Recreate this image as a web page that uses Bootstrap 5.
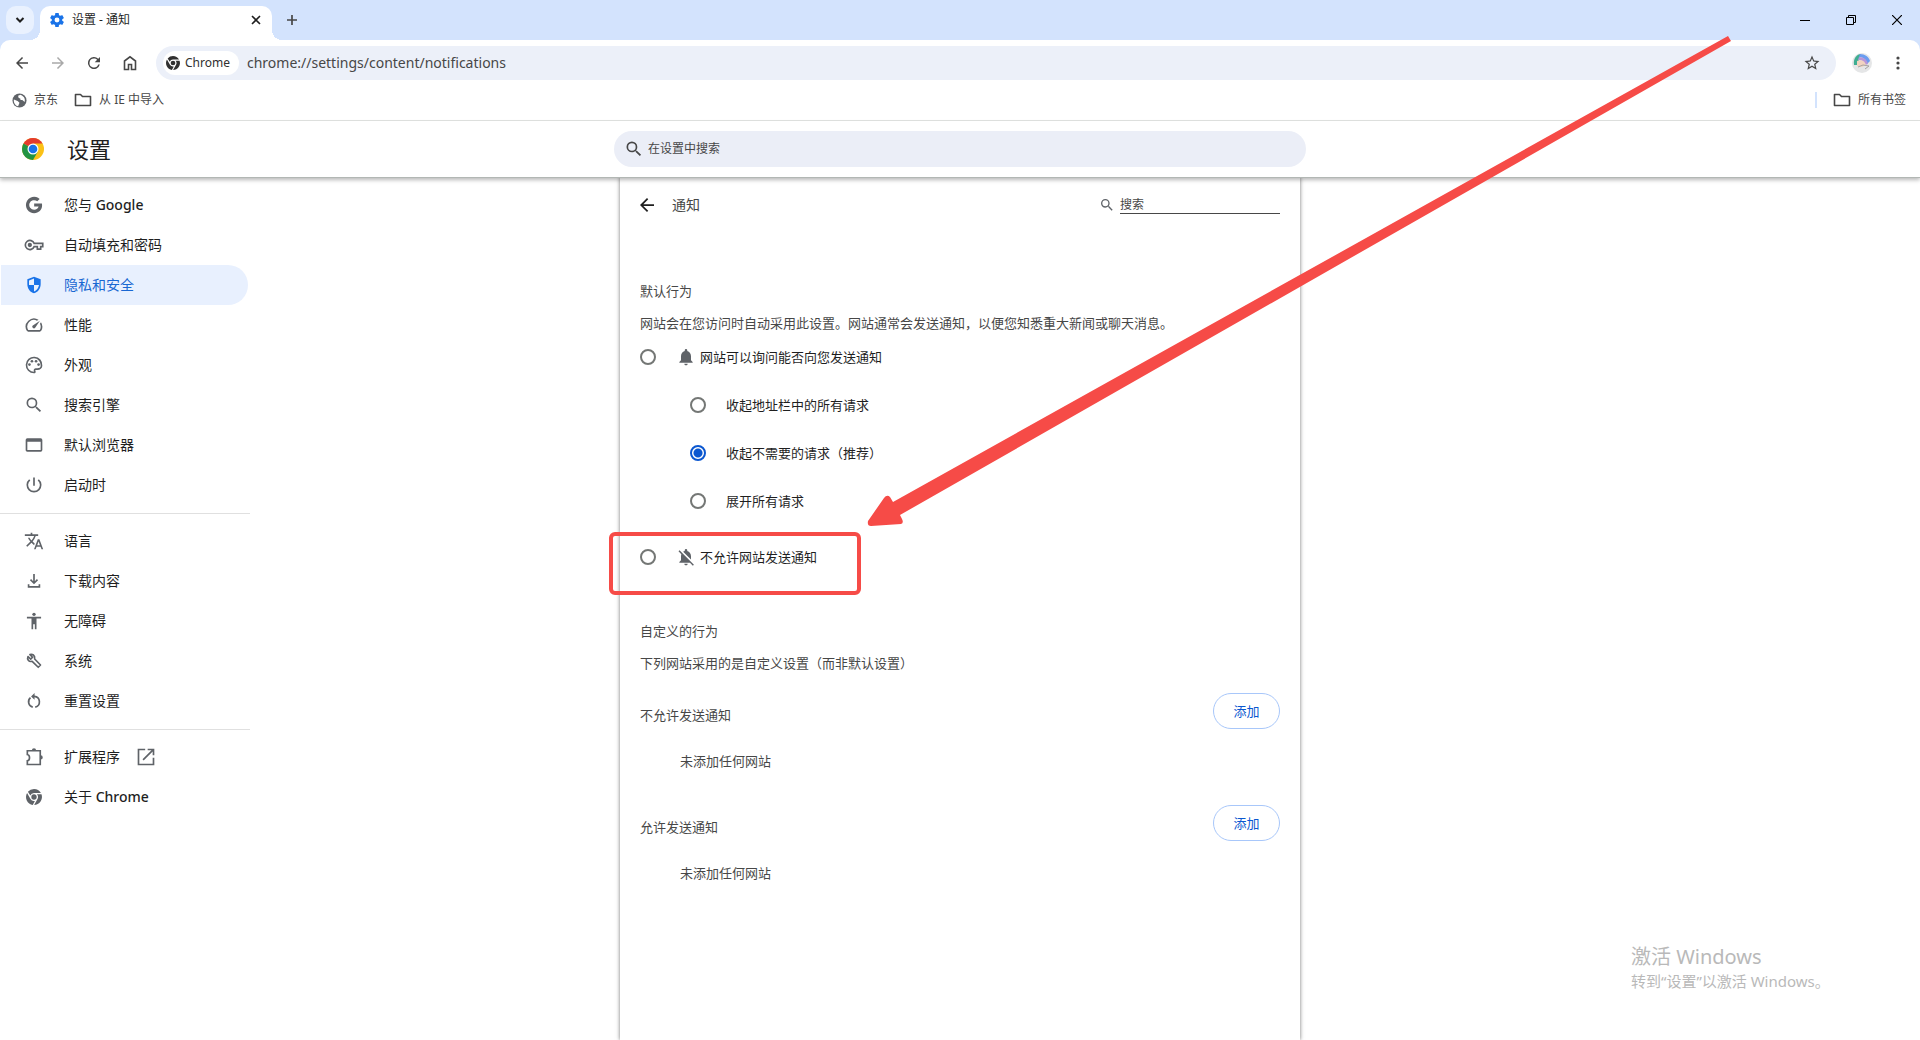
<!DOCTYPE html>
<html lang="zh-CN">
<head>
<meta charset="utf-8">
<meta name="viewport" content="width=device-width, initial-scale=1">
<title>设置 - 通知</title>
<link href="https://cdn.jsdelivr.net/npm/bootstrap@5.3.0/dist/css/bootstrap.min.css" rel="stylesheet">
<style>
body{font-family:"Noto Sans","Noto Sans CJK SC",sans-serif;font-size:13px;line-height:20px;color:#474747;background:#fff;overflow-x:hidden}
svg{display:block;fill:currentColor;flex:none}
button{border:0;background:none;padding:0;color:inherit}
a{color:inherit;text-decoration:none}
input::placeholder{color:#474747;opacity:1}
.tabstrip{height:40px;background:#d3e3fd;color:#1f1f1f;font-size:12px;padding:6px 0 0 6px}
.tab-list-btn{width:28px;height:28px;border-radius:10px;background:#e9f1fe;margin-right:6px}
.browser-tab{width:232px;height:34px;background:#fff;border-radius:10px 10px 0 0;padding:0 10px 6px;position:relative}
.browser-tab::before,.browser-tab::after{content:"";position:absolute;bottom:0;width:10px;height:10px}
.browser-tab::before{left:-10px;background:radial-gradient(circle at 0 0,transparent 10px,#fff 10px)}
.browser-tab::after{right:-10px;background:radial-gradient(circle at 100% 0,transparent 10px,#fff 10px)}
.newtab{height:28px;width:28px;margin-left:6px;color:#474747}
.winbtn{width:46px;height:28px;color:#000}
.toolbar-wrap{background:#d3e3fd}
.toolbar{height:46px;background:#fff;border-radius:10px 10px 0 0;padding:0 4px;color:#474747}
.toolbtn{width:36px;height:34px}
.omnibox{height:34px;border-radius:17px;background:#ecf0f9;margin:0 16px 0 8px;padding:0 15px 0 7px}
.chip{height:24px;border-radius:12px;background:#fff;padding:0 9px 0 3px;color:#303030;gap:5px;font-size:12px}
.address{border:0;background:none;outline:0;padding:0;font-size:14px;color:#474747}
.bookmarks{height:35px;padding:0 14px 6px 12px;font-size:12px;gap:8px;border-bottom:1px solid #e0e2e0}
.bookmarks a{gap:7px}
.bm-line{width:2px;height:16px;background:#d3e3fd}
.settings-head{height:56px;box-shadow:0 1px 0 #b2b7b4,0 3px 4px rgba(0,0,0,.28);position:relative;z-index:2;background:#fff}
.side-w{width:250px;flex:none}
.brand{padding-left:21px;gap:22px}
.head-title{font-size:22px;line-height:32px;color:#1f1f1f;font-weight:400}
.head-search{width:692px;max-width:100%;height:36px;border-radius:18px;background:#ebeef7;padding:0 10px;gap:4px}
.head-search input,.find-box input{border:0;outline:0;background:none;font-size:12px;padding:0;color:#474747}
.side-nav{padding-top:8px;font-size:14px;color:#1f1f1f}
.side-nav a{height:40px;padding-left:23px;gap:20px;margin:0 2px 0 1px}
.side-nav b{font-weight:500}
.side-nav svg{color:#5f6368}
.side-nav .active,.side-nav .active svg{color:#1a73e8}
.side-nav .active{background:#e8f0fe;border-radius:0 20px 20px 0;color:#1967d2}
.side-nav hr{margin:8px 0 7px;border-top:1px solid #e0e0e0;opacity:1}
.pane{width:680px;max-width:100%;background:#fff;box-shadow:0 0 4px rgba(0,0,0,.55);padding:0 20px}
.pane-head{height:56px;font-size:14px}
.pane-title{gap:18px}
.find-box{gap:5px}
.find-box input{width:160px;height:18px;border-bottom:1px solid #474747;color:#474747}
.subtitle{margin:0 0 12px;line-height:20px;font-size:13px;font-weight:400}
.opt{height:48px;color:#1f1f1f}
.opt label{cursor:pointer}
.opt .form-check-input{width:16px;height:16px;margin:0;border:2px solid #747775;background-image:none;flex:none}
.opt .form-check-input:checked{border-color:#0b57d0;background:radial-gradient(circle,#0b57d0 4px,#fff 5px)}
.opt-top{gap:20px}
.opt-sub{padding-left:50px;gap:20px}
.marked{position:relative}
.marked::after{content:"";position:absolute;left:-31px;top:-1px;width:252px;height:63px;border:4px solid #f64b47;border-radius:6px;pointer-events:none}
.custom{margin-top:40px}
.add-btn{width:67px;height:36px;border:1px solid #a8c7fa;border-radius:18px;color:#0b57d0}
.site-row{padding:20px 0 8px}
.none-row{height:48px;padding-left:40px}
.arrow-layer{position:absolute;left:50%;top:0;margin-left:-100px;z-index:5;pointer-events:none;color:#f64b47}
.watermark{position:absolute;right:89px;bottom:48px;width:200px;color:#b9b9b9;font-size:15px;line-height:22px;white-space:nowrap;pointer-events:none}
.watermark strong{font-size:20px;line-height:26px;font-weight:400;display:block}
</style>
<script src="https://cdn.jsdelivr.net/npm/bootstrap@5.3.0/dist/js/bootstrap.bundle.min.js"></script>
</head>
<body>
<svg width="0" height="0" class="position-absolute" aria-hidden="true">
  <symbol id="search" viewBox="0 0 24 24"><path d="M15.5 14h-.79l-.28-.27A6.47 6.47 0 0 0 16 9.5 6.5 6.5 0 1 0 9.5 16c1.61 0 3.09-.59 4.23-1.57l.27.28v.79l5 4.99L20.49 19l-4.99-5zm-6 0a4.5 4.5 0 1 1 0-9 4.5 4.5 0 0 1 0 9z"/></symbol>
  <symbol id="back" viewBox="0 0 24 24"><path d="M20 11H7.830l5.590-5.590L12 4l-8 8 8 8 1.410-1.410L7.830 13H20z"/></symbol>
  <symbol id="folder" viewBox="0 0 18 16"><path fill="none" stroke="currentColor" stroke-width="1.600" stroke-linejoin="round" d="M1.500 13.500V2.500h5l2 2h8v9z"/></symbol>
  <symbol id="chromemono" viewBox="1 1 22 22"><path d="M12 1a11 11 0 0 1 9.500 5.500H12a5.500 5.500 0 0 0-5.100 3.500L3.600 4.900A11 11 0 0 1 12 1zM22.300 8.300A11 11 0 0 1 12.200 23l4.600-8.300a5.500 5.500 0 0 0-.8-6.400zM2.500 6.500l4.700 8.200a5.500 5.500 0 0 0 6 2.700L10.300 22.900A11 11 0 0 1 2.500 6.500z"/><circle cx="12" cy="12" r="3.700"/></symbol>
  <symbol id="bell" viewBox="0 0 24 24"><path d="M12 22c1.100 0 2-.9 2-2h-4c0 1.100.9 2 2 2zm6-6v-5c0-3.070-1.640-5.640-4.500-6.320V4a1.500 1.500 0 0 0-3 0v.68C7.630 5.360 6 7.920 6 11v5l-2 2v1h16v-1z"/></symbol>
  <symbol id="belloff" viewBox="0 0 24 24"><path d="M7.500 7.100 4.300 3.800 3 5.100l3.400 3.500A8 8 0 0 0 6 11v5l-2 2v1h12.800l3.400 3.500 1.300-1.300zM12 22c1.110 0 2-.89 2-2h-4c0 1.110.89 2 2 2zm6-7V11c0-3.080-1.640-5.640-4.500-6.320V4a1.500 1.500 0 0 0-3 0v.68a6 6 0 0 0-1.900.9z"/></symbol>
</svg>

<div class="min-vh-100 d-flex flex-column position-relative">
  <header>
    <div class="tabstrip d-flex">
      <button class="tab-list-btn d-flex align-items-center justify-content-center" aria-label="搜索标签页"><svg width="10" height="8" viewBox="0 0 10 8"><path d="m1.500 2 3.500 3.500L8.500 2" fill="none" stroke="currentColor" stroke-width="2"/></svg></button>
      <div class="browser-tab d-flex align-items-center gap-2">
        <svg width="14" height="14" viewBox="2 2 20 20" color="#1a73e8"><path d="M19.430 12.980a7.800 7.800 0 0 0 0-1.960l2.110-1.650a.5.500 0 0 0 .12-.64l-2-3.460a.5.500 0 0 0-.61-.22l-2.490 1a7.300 7.300 0 0 0-1.690-.98l-.38-2.650A.5.500 0 0 0 14 2h-4a.5.500 0 0 0-.49.420l-.38 2.650c-.61.25-1.170.59-1.690.98l-2.490-1a.5.500 0 0 0-.61.220l-2 3.460a.5.500 0 0 0 .12.640l2.110 1.650a7.900 7.900 0 0 0 0 1.960l-2.110 1.650a.5.500 0 0 0-.12.640l2 3.460c.12.220.39.3.61.220l2.490-1c.52.4 1.080.73 1.690.98l.38 2.650c.03.240.24.420.49.420h4c.25 0 .46-.18.49-.42l.38-2.650c.61-.25 1.170-.59 1.690-.98l2.490 1c.23.090.49 0 .61-.22l2-3.460a.5.500 0 0 0-.12-.64zM12 15.500a3.500 3.500 0 1 1 0-7 3.500 3.500 0 0 1 0 7z"/></svg>
        <span class="flex-grow-1">设置 - 通知</span>
        <button aria-label="关闭标签页"><svg width="12" height="12" viewBox="0 0 12 12"><path d="m2 2 8 8m0-8-8 8" stroke="currentColor" stroke-width="1.600"/></svg></button>
      </div>
      <button class="newtab d-flex align-items-center justify-content-center" aria-label="新标签页"><svg width="12" height="12" viewBox="0 0 12 12"><path d="M6 1v10M1 6h10" stroke="currentColor" stroke-width="1.700"/></svg></button>
      <div class="ms-auto d-flex">
        <button class="winbtn d-flex align-items-center justify-content-center" aria-label="最小化"><svg width="10" height="10" viewBox="0 0 10 10"><path d="M0 5h10v1H0z"/></svg></button>
        <button class="winbtn d-flex align-items-center justify-content-center" aria-label="还原"><svg width="10" height="10" viewBox="0 0 10 10"><path d="M.5 2.500h7v7h-7zM2.500 2.500v-2h7v7h-2" fill="none" stroke="currentColor"/></svg></button>
        <button class="winbtn d-flex align-items-center justify-content-center" aria-label="关闭"><svg width="10" height="10" viewBox="0 0 10 10"><path d="m0 0 10 10M10 0 0 10" stroke="currentColor" stroke-width="1.200"/></svg></button>
      </div>
    </div>
    <div class="toolbar-wrap"><div class="toolbar d-flex align-items-center">
      <button class="toolbtn d-flex align-items-center justify-content-center" aria-label="后退"><svg width="18" height="18"><use href="#back"/></svg></button>
      <button class="toolbtn d-flex align-items-center justify-content-center" aria-label="前进" disabled><svg width="18" height="18" viewBox="0 0 24 24" color="#a9a9a9"><path d="m12 4-1.410 1.410L16.170 11H4v2h12.170l-5.580 5.590L12 20l8-8z"/></svg></button>
      <button class="toolbtn d-flex align-items-center justify-content-center" aria-label="重新加载"><svg width="18" height="18" viewBox="0 0 24 24"><path d="M17.650 6.350A8 8 0 1 0 19.730 14h-2.080A6 6 0 1 1 12 6c1.660 0 3.140.69 4.220 1.780L13 11h7V4z"/></svg></button>
      <button class="toolbtn d-flex align-items-center justify-content-center" aria-label="主页"><svg width="16" height="16" viewBox="0 0 16 16"><path d="M2.500 14.500V6L8 1.800 13.500 6v8.500h-4v-5h-3v5z" fill="none" stroke="currentColor" stroke-width="1.600"/></svg></button>
      <div class="omnibox d-flex align-items-center flex-grow-1 gap-2">
        <button class="chip d-flex align-items-center"><svg width="14" height="14"><use href="#chromemono"/></svg>Chrome</button>
        <input class="address flex-grow-1" aria-label="地址" value="chrome://settings/content/notifications">
        <button aria-label="收藏"><svg width="18" height="18" viewBox="0 0 24 24"><path d="m22 9.240-7.190-.62L12 2 9.190 8.630 2 9.240l5.460 4.730L5.820 21 12 17.270 18.180 21l-1.630-7.030zM12 15.400l-3.760 2.270 1-4.280-3.320-2.880 4.380-.38L12 6.100l1.710 4.040 4.380.38-3.320 2.880 1 4.280z"/></svg></button>
      </div>
      <button class="me-2" aria-label="用户"><svg width="20" height="20" viewBox="0 0 20 20"><circle cx="10" cy="10" r="10" fill="#e5e6e7"/><path d="M2 12C1 5 5 1 9 1l-2 6-2 5z" fill="#3fae92"/><path d="M8 1c5 0 9 3 10 7l-3 3C14 6 11 4 7 4z" fill="#6a9cf0"/><path d="M7 4c5 0 8 3 9 7l-3 1c-1-4-3-5-7-5z" fill="#b796d8"/><path d="M5 8c4-2 8 0 9 4l-4 2-5-1z" fill="#f2d3c0"/><path d="m6 14 5-2 6 1-4 3" stroke="#a7a3a0" fill="none"/></svg></button>
      <button class="toolbtn d-flex align-items-center justify-content-center" aria-label="更多"><svg width="4" height="14" viewBox="0 0 4 14"><circle cx="2" cy="2" r="1.600"/><circle cx="2" cy="7" r="1.600"/><circle cx="2" cy="12" r="1.600"/></svg></button>
    </div></div>
    <nav class="bookmarks d-flex align-items-center" aria-label="书签栏">
      <a href="#" class="d-flex align-items-center me-2"><svg width="15" height="15" viewBox="0 0 16 16"><circle cx="8" cy="8" r="7.500" color="#5f6368"/><path d="M9 1.800 6.500 3 7 5l2 1v1.500h2l2.500 2C14 7 14 4 9 1.800zM2 7l4 1.500 2 2-1.500 3.700C3.500 13.500 1.500 10.500 2 7z" fill="#fff"/></svg>京东</a>
      <a href="#" class="d-flex align-items-center"><svg width="18" height="16"><use href="#folder"/></svg>从 IE 中导入</a>
      <span class="bm-line ms-auto me-2"></span>
      <a href="#" class="d-flex align-items-center"><svg width="18" height="16"><use href="#folder"/></svg>所有书签</a>
    </nav>
  </header>

  <div class="settings-head d-flex align-items-center">
    <div class="side-w brand d-flex align-items-center">
      <svg width="24" height="24" viewBox="0 0 48 48"><circle cx="24" cy="24" r="22" fill="#fbc116"/><path d="M24 24 4.950 13A22 22 0 0 1 43.050 13z" fill="#e33b2e"/><path d="M4.950 13A22 22 0 0 0 24 46l9.500-16.500L24 24z" fill="#229342"/><path d="M24 13h19.050l-9.500 16.500z" fill="#fbc116"/><circle cx="24" cy="24" r="11" fill="#fff"/><circle cx="24" cy="24" r="8.700" fill="#1a73e8"/></svg>
      <h1 class="head-title mb-0">设置</h1>
    </div>
    <div class="flex-grow-1 d-flex justify-content-center">
      <div class="head-search d-flex align-items-center"><svg width="20" height="20"><use href="#search"/></svg><input class="flex-grow-1" type="text" aria-label="在设置中搜索" placeholder="在设置中搜索"></div>
    </div>
    <div class="side-w"></div>
  </div>

  <div class="d-flex flex-grow-1">
    <nav class="side-nav side-w" aria-label="设置">
      <a href="#" class="d-flex align-items-center"><svg width="20" height="20" viewBox="0 0 24 24"><path d="M12.200 10.200v3.700h5.300c-.5 2.300-2.500 3.900-5.300 3.900a5.800 5.800 0 1 1 3.700-10.200l2.900-2.800A9.800 9.800 0 1 0 12.200 21.800c5.600 0 9.700-4 9.500-9.800 0-.6-.1-1.200-.2-1.800z"/></svg><span>您与 <b>Google</b></span></a>
      <a href="#" class="d-flex align-items-center"><svg width="20" height="20" viewBox="0 0 24 24"><path fill="none" stroke="currentColor" stroke-width="2" d="M12.200 10A5.500 5.500 0 1 0 12.200 14H16v3h4v-3h2.500v-4z"/><circle cx="7" cy="12" r="2.600"/></svg>自动填充和密码</a>
      <a href="#" class="active d-flex align-items-center" aria-current="page"><svg width="20" height="20" viewBox="0 0 24 24"><path d="M12 2 4 5v6.100c0 5.050 3.400 9.800 8 10.900 4.600-1.100 8-5.850 8-10.900V5zm0 10h6c-.5 3.500-2.700 6.700-6 7.800V12H6V6.500l6-2.300z"/></svg>隐私和安全</a>
      <a href="#" class="d-flex align-items-center"><svg width="20" height="20" viewBox="0 0 24 24"><path d="m20.380 8.570-1.230 1.850a8 8 0 0 1-.22 7.580H5.070A8 8 0 0 1 15.580 6.850l1.850-1.230A10 10 0 0 0 3.350 19a2 2 0 0 0 1.720 1h13.850a2 2 0 0 0 1.740-1 10 10 0 0 0-.27-10.440zM10.590 15.410a2 2 0 0 0 2.830 0l5.660-8.490-8.490 5.660a2 2 0 0 0 0 2.830z"/></svg>性能</a>
      <a href="#" class="d-flex align-items-center"><svg width="20" height="20" viewBox="0 0 24 24"><path d="M12 22a10 10 0 1 1 10-9c0 3.300-2.700 5-6 5h-1.800c-.6 0-.8.6-.4 1.100.8 1.400-.2 2.900-1.800 2.900zm0-18a8 8 0 0 0-.1 16c-.9-2.100.4-4 2.300-4H16c2.200 0 4-.8 4-3 0-5-3.600-9-8-9z"/><circle cx="6.500" cy="11.500" r="1.600"/><circle cx="9.500" cy="7.500" r="1.600"/><circle cx="14.500" cy="7.500" r="1.600"/><circle cx="17.500" cy="11.500" r="1.600"/></svg>外观</a>
      <a href="#" class="d-flex align-items-center"><svg width="20" height="20"><use href="#search"/></svg>搜索引擎</a>
      <a href="#" class="d-flex align-items-center"><svg width="20" height="20" viewBox="0 0 24 24"><path d="M20 4H4a2 2 0 0 0-2 2v12c0 1.100.9 2 2 2h16a2 2 0 0 0 2-2V6a2 2 0 0 0-2-2zm0 14H4V8h16z"/></svg>默认浏览器</a>
      <a href="#" class="d-flex align-items-center"><svg width="20" height="20" viewBox="0 0 24 24"><path d="M13 3h-2v10h2zm4.830 2.170-1.420 1.420A7 7 0 1 1 7.580 6.580L6.170 5.170A9 9 0 1 0 17.830 5.170z"/></svg>启动时</a>
      <hr>
      <a href="#" class="d-flex align-items-center"><svg width="20" height="20" viewBox="0 0 24 24"><path d="m12.870 15.070-2.540-2.510.03-.03A17.500 17.500 0 0 0 14.070 6H17V4h-7V2H8v2H1v1.990h11.170A15.700 15.700 0 0 1 9 11.350 15.600 15.600 0 0 1 6.690 8h-2c.73 1.630 1.730 3.170 2.980 4.560l-5.090 5.020L4 19l5-5 3.110 3.110zM18.500 10h-2L12 22h2l1.120-3h4.750L21 22h2zm-2.620 7 1.620-4.330L19.120 17z"/></svg>语言</a>
      <a href="#" class="d-flex align-items-center"><svg width="20" height="20" viewBox="0 0 24 24"><path d="M11 3.500h2v8.700l2.500-2.500 1.400 1.400L12 16l-4.900-4.900 1.400-1.400 2.500 2.500zM4.500 16h2v2h11v-2h2v4h-15z"/></svg>下载内容</a>
      <a href="#" class="d-flex align-items-center"><svg width="20" height="20" viewBox="0 0 24 24"><circle cx="12" cy="4" r="2"/><path d="M20.500 9H15v13h-2v-6h-2v6H9V9H3.500V7h17z"/></svg>无障碍</a>
      <a href="#" class="d-flex align-items-center"><svg width="20" height="20" viewBox="0 0 24 24"><path d="M4.800 6.600 8 9.800 10.300 7.500 7.100 4.300C9.800 3.200 13.500 5 12.800 9.600l7 7.200-2.700 2.700L9.800 12.400C5.500 13.500 3.400 9.800 4.800 6.600z" fill="none" stroke="currentColor" stroke-width="2" stroke-linejoin="round"/></svg>系统</a>
      <a href="#" class="d-flex align-items-center"><svg width="20" height="20" viewBox="0 0 24 24"><path d="M7.800 8A6.500 6.500 0 0 0 10.500 19.300M13.500 19.300A6.500 6.500 0 0 0 12.500 6.500h-2" fill="none" stroke="currentColor" stroke-width="2"/><path d="m12.700 2.500-4.200 4 4.200 4z"/></svg>重置设置</a>
      <hr>
      <a href="#" class="d-flex align-items-center"><svg width="20" height="20" viewBox="0 0 24 24"><path d="M4 4.500h15.500V21H4v-4.500c3.500-.5 3.500-7 0-7.500z" fill="none" stroke="currentColor" stroke-width="2"/><path d="M9.500 4a2.500 2.500 0 0 1 5 0zM20 10a2.500 2.500 0 0 1 0 5z"/></svg><span class="d-flex align-items-center gap-3">扩展程序<svg width="20" height="20" viewBox="0 0 24 24"><path d="M20 20H4V4h7V2H2v20h20v-9h-2zM14 2v2h4.590l-10.800 10.800 1.410 1.410L20 5.410V10h2V2z"/></svg></span></a>
      <a href="#" class="d-flex align-items-center"><svg width="20" height="20"><use href="#chromemono" x="2" y="2" width="16" height="16"/></svg><span>关于 <b>Chrome</b></span></a>
    </nav>

    <main class="flex-grow-1 d-flex justify-content-center">
      <div class="pane">
        <div class="pane-head d-flex align-items-center justify-content-between">
          <div class="pane-title d-flex align-items-center"><button aria-label="返回"><svg width="14" height="14" viewBox="4 4 16 16" color="#1f1f1f"><path d="M20 11H7.830l5.590-5.590L12 4l-8 8 8 8 1.410-1.410L7.830 13H20z"/></svg></button><span>通知</span></div>
          <div class="find-box d-flex align-items-center"><svg width="16" height="16" color="#5f6368"><use href="#search"/></svg><input type="text" aria-label="搜索" placeholder="搜索"></div>
        </div>
        <section class="mt-5">
          <h2 class="subtitle">默认行为</h2>
          <p class="subtitle mb-0">网站会在您访问时自动采用此设置。网站通常会发送通知，以便您知悉重大新闻或聊天消息。</p>
          <div class="opt opt-top d-flex align-items-center"><input class="form-check-input" type="radio" name="mode" id="ask"><label for="ask" class="d-flex align-items-center gap-1"><svg width="20" height="20" color="#5f6368"><use href="#bell"/></svg>网站可以询问能否向您发送通知</label></div>
          <div class="opt opt-sub d-flex align-items-center"><input class="form-check-input" type="radio" name="ui" id="fold"><label for="fold">收起地址栏中的所有请求</label></div>
          <div class="opt opt-sub d-flex align-items-center"><input class="form-check-input" type="radio" name="ui" id="fold2" checked><label for="fold2">收起不需要的请求（推荐）</label></div>
          <div class="opt opt-sub d-flex align-items-center"><input class="form-check-input" type="radio" name="ui" id="expand"><label for="expand">展开所有请求</label></div>
          <div class="opt opt-top marked mt-2 d-flex align-items-center"><input class="form-check-input" type="radio" name="mode" id="deny"><label for="deny" class="d-flex align-items-center gap-1"><svg width="20" height="20" color="#5f6368"><use href="#belloff"/></svg>不允许网站发送通知</label></div>
        </section>
        <section class="custom">
          <h2 class="subtitle">自定义的行为</h2>
          <p class="subtitle mb-0">下列网站采用的是自定义设置（而非默认设置）</p>
          <div class="site-row d-flex justify-content-between align-items-center"><span class="pt-2">不允许发送通知</span><button class="add-btn">添加</button></div>
          <div class="none-row d-flex align-items-center">未添加任何网站</div>
          <div class="site-row d-flex justify-content-between align-items-center"><span class="pt-2">允许发送通知</span><button class="add-btn">添加</button></div>
          <div class="none-row d-flex align-items-center">未添加任何网站</div>
        </section>
      </div>
    </main>
    <div class="side-w"></div>
  </div>

  <svg class="arrow-layer" width="880" height="540" viewBox="860 0 880 540" aria-hidden="true"><path d="M1728 36 893 502 890 497Q887 494 884 498L868 521Q867 526 871 526L901 524Q904 523 902 519L900 515 1731 41z"/></svg>
  <div class="watermark"><strong>激活 Windows</strong>转到“设置”以激活 Windows。</div>
</div>
</body>
</html>
